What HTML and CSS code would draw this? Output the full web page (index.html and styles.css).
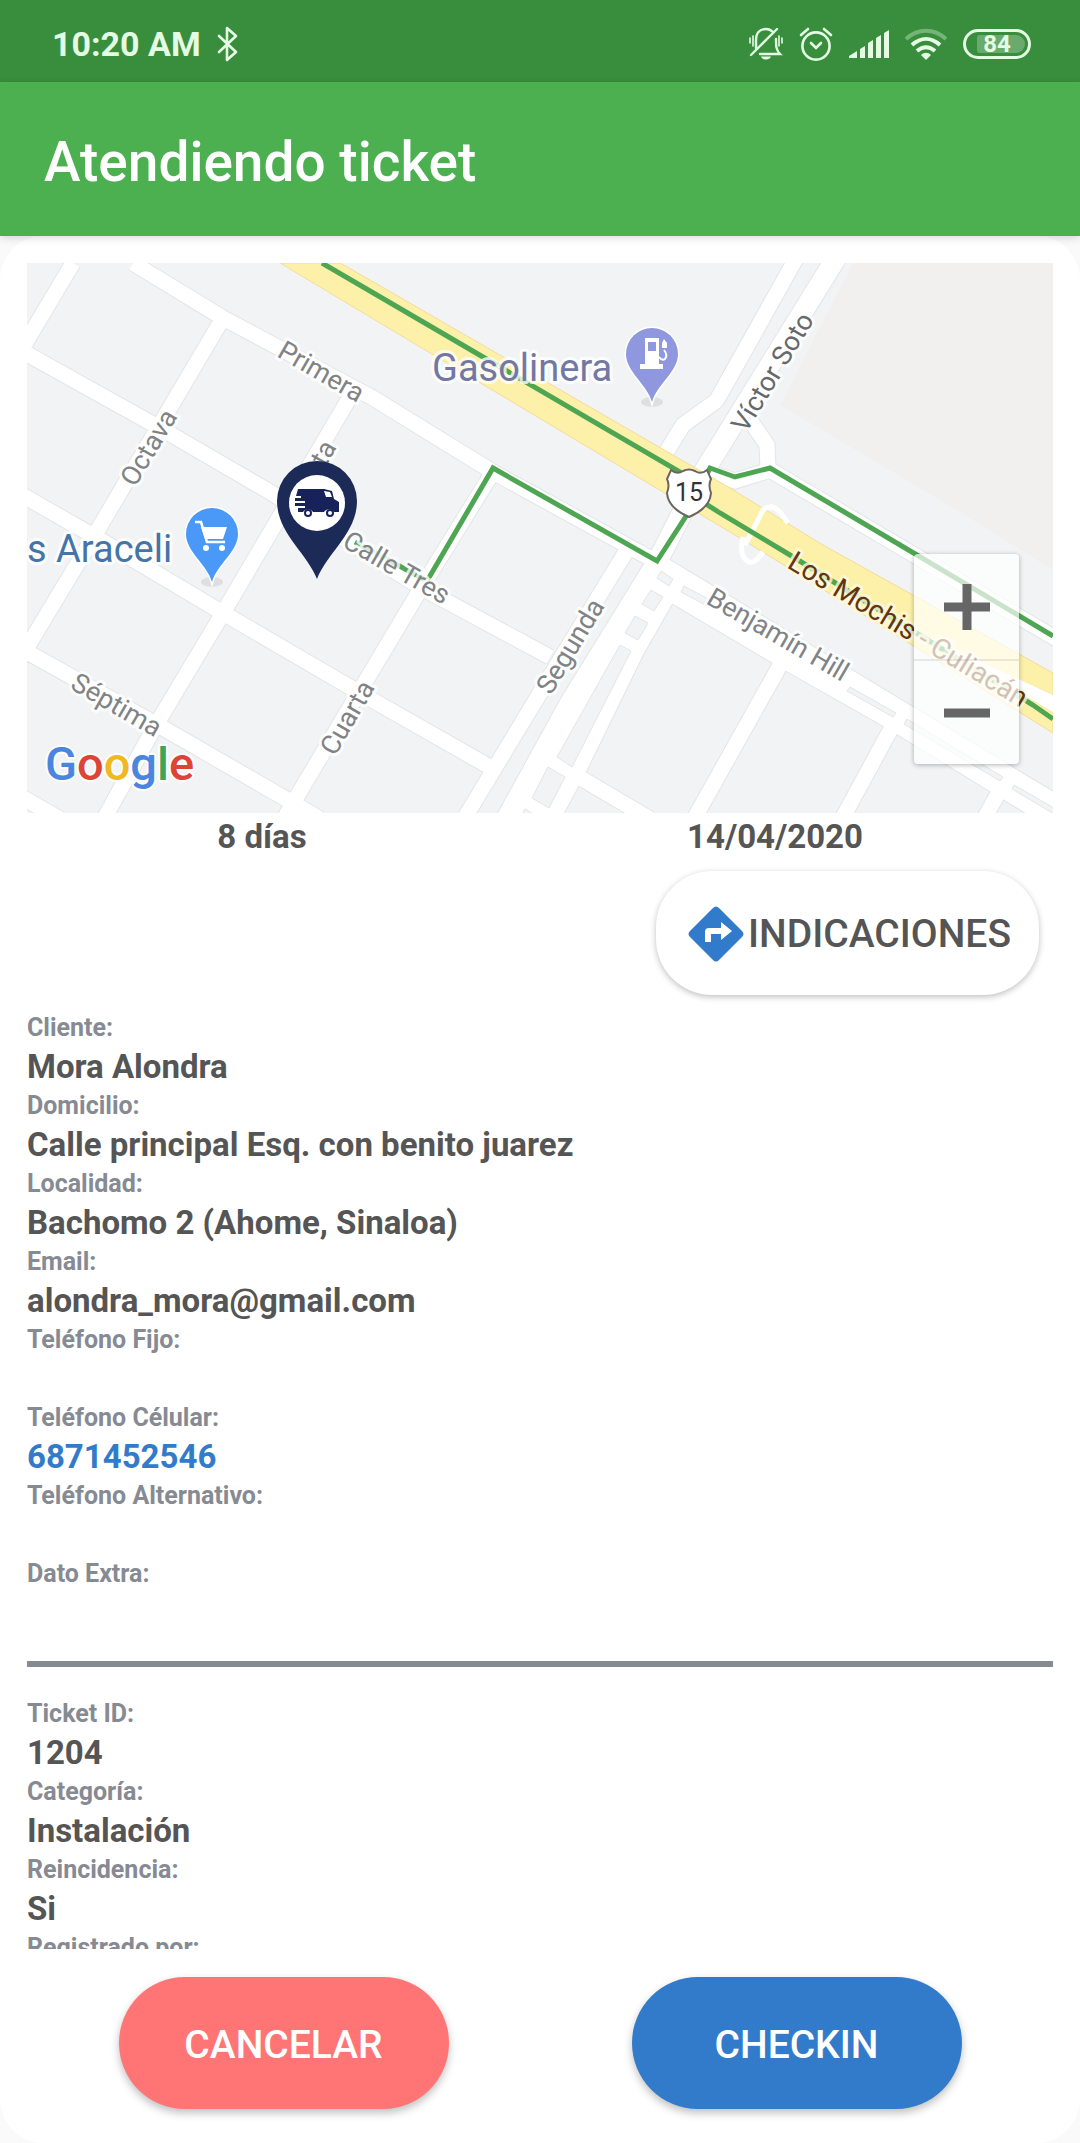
FILE: index.html
```
<!DOCTYPE html>
<html lang="es">
<head>
  <meta charset="UTF-8">
  <meta name="viewport" content="width=device-width, initial-scale=1">
  <title>Atendiendo ticket</title>
  <link rel="stylesheet" href="styles.css">
</head>
<body>

  <div class="status-bar">
    <span class="time">10:20 AM</span>
    <svg class="bluetooth" width="22" height="36" viewBox="0 0 22 36" fill="none" stroke="currentColor" stroke-width="2.6" stroke-linejoin="round" stroke-linecap="round">
      <path d="M2 10l17 16-9 8V2l9 8L2 26"/>
    </svg>
    <div class="status-icons">
      <!-- silent -->
      <svg width="34" height="34" viewBox="0 0 34 34" fill="none" stroke="currentColor" stroke-width="2.4" stroke-linecap="round">
        <path d="M7 21V13C7 6 11 2 17 2c3 0 5 1 7 3M27 12c0 7 0 11 4 15H11"/>
        <path d="M2 28L28 2"/>
        <path d="M1 11v5M4 9v10M30 9v10M33 11v5" stroke-width="1.6"/>
        <path d="M12 29.500h10c-1 4-9 4-10 0z" fill="currentColor" stroke="none"/>
      </svg>
      <!-- alarm -->
      <svg width="34" height="34" viewBox="0 0 34 34" fill="none" stroke="currentColor" stroke-width="2.6" stroke-linecap="round">
        <circle cx="17" cy="19" r="13.600"/>
        <path d="M12 16l5 5 5-5M2 8l7-6M32 8l-7-6"/>
      </svg>
      <!-- signal -->
      <svg width="40" height="30" viewBox="0 0 40 30" fill="currentColor">
        <path d="M0 27l8-5v7H0zM11 20l5-3v12h-5zM19 14l5-3v18h-5zM27 9l5-3v23h-5zM35 4l5-3v28h-5z"/>
      </svg>
      <!-- wifi -->
      <svg width="42" height="32" viewBox="0 0 42 32" fill="none" stroke="currentColor" stroke-width="4">
        <path d="M1 11c12-11 28-11 40 0" opacity=".35"/>
        <path d="M7 17c9-8 19-8 28 0"/>
        <path d="M12 23c6-5 12-5 18 0"/>
        <path d="M16 27c3-3 7-3 10 0l-5 5z" fill="currentColor" stroke="none"/>
      </svg>
      <span class="battery"><b>84</b></span>
    </div>
  </div>

  <header class="app-bar">
    <h1>Atendiendo ticket</h1>
  </header>

  <main class="card">
    <div class="scroll">
      <div class="map">
        <svg class="map-canvas" viewBox="27 263 1026 550" preserveAspectRatio="xMidYMid slice">
          <defs>
            <g id="streets" fill="none">
              <path d="M73 263L20 352M133 263L223 318L373 398L493 472L657 562"/>
              <path d="M20 350L160 428L270 492L420 587L550 657"/>
              <path d="M20 494L92 535L223 613L367 697L490 767"/>
              <path d="M20 648L163 728L293 803L320 819M20 796L60 819"/>
              <path d="M223 318L93 538L20 659M353 392L223 613L153 730L104 819"/>
              <path d="M493 472L420 590L293 803L284 819M627 550L540 693L464 819"/>
              <path d="M798 255L718 398Q716 402 712 404L683 425L660 462"/>
              <path d="M750 420L767 445L768 468"/>
              <path d="M540 754L650 819M677 580L637 650L577 773L552 819"/>
              <path d="M783 660L694 819M892 727L842 819M1000 790L984 819"/>
              <path d="M700 470L735 481L770 470L1060 641"/>
            </g>
            <g id="avenue" fill="none">
              <path d="M838 255L700 478L657 562L570 703L504 823"/>
            </g>
            <path id="benjamin" d="M660 554L1060 796V834L993 793L887 728L788 672L668 601z"/>
            <path id="pin" d="M0 48C-5 30-26 18-26 0A26 26 0 0 1 26 0C26 18 5 30 0 48z"/>
          </defs>

          <rect class="land" x="27" y="263" width="1026" height="550"/>
          <path class="park" d="M853 263L780 405L960 512L1053 570V263z"/>

          <!-- street edges first, then the white fill on top -->
          <use href="#streets" class="edge"/>
          <use href="#avenue" class="edge wide"/>
          <use href="#benjamin" class="edge thin"/>
          <use href="#streets" class="road"/>
          <use href="#avenue" class="road wide"/>
          <use href="#benjamin" class="white"/>
          <path class="white" d="M657 562L677 583L637 647L577 773L555 813H514L570 703z"/>

          <!-- islands between the lanes -->
          <g class="island">
            <path d="M661 571l12 8-4 7-12-8zM651 590l12 7-9 14-12-7zM635 616l13 7-10 17-13-7z"/>
            <path d="M620 645l11 6-59 116-15-10zM548 767l17 10-16 31-17-10zM525 809l10 6h-13z"/>
            <path d="M684 586l26 14-3 6-26-14zM850 687l46 26-3 4-46-26zM907 719l96 58-3 4-96-57zM1014 785l40 23v6l-42-25z"/>
          </g>

          <!-- highway 15 -->
          <path class="highway" d="M280 263H340L370 280L730 488L823 545L1053 673V695L915 632L1053 712V733L787 567L730 532L663 492L370 317z"/>
          <path class="white" d="M905 626L1053 695V712L950 653z"/>
          <path class="ramp" d="M745 545L757 522L763 510Q771 503 780 512L788 523M743 537Q739 553 746 560T763 552"/>

          <path class="route" d="M322 263L370 291L680 472L692 495L720 513L790 555L1033 705L1053 719"/>
          <path class="route" d="M355 542L427 581L493 468L657 561L690 510L710 468L735 477L770 468L917 555L1053 636"/>

          <g class="street-name">
            <text transform="translate(276 356) rotate(30)">Primera</text>
            <text transform="translate(135 488) rotate(-59)">Octava</text>
            <text transform="translate(337 447) rotate(-60)" text-anchor="end">Quinta</text>
            <text transform="translate(341 546) rotate(30)">Calle Tres</text>
            <text transform="translate(551 696) rotate(-59)">Segunda</text>
            <text transform="translate(335 757) rotate(-60)">Cuarta</text>
            <text transform="translate(69 688) rotate(30)">Séptima</text>
            <text transform="translate(705 603) rotate(30)">Benjamín Hill</text>
            <text class="dark" transform="translate(746 434) rotate(-59)">Víctor Soto</text>
            <text class="brown" transform="translate(786 567) rotate(31)">Los Mochis - Culiacán</text>
          </g>

          <path class="shield" d="M671 470q6 5 12 1 6-3 12 0 6 4 12-1l4 9q-3 6 0 14-1 15-22 24-21-9-22-24 3-8 0-14z"/>
          <text class="shield-number" x="689" y="501" text-anchor="middle">15</text>

          <text class="place gas" x="432" y="381">Gasolinera</text>
          <text class="place shop" x="27" y="562">s Araceli</text>

          <g transform="translate(652 354)">
            <ellipse class="pin-shadow" cx="0" cy="48" rx="11" ry="5"/>
            <use href="#pin" class="pin-gas"/>
            <path fill="#fff" d="M-7-16H7V10h4v5h-23v-5h5zM-4-12v9h8v-9z" fill-rule="evenodd"/>
            <path fill="none" stroke="#fff" stroke-width="2" d="M7 3q3 4 6 2 3-4-1-9"/>
            <path fill="#fff" d="M10-11l2-4 3 4v5h-5z"/>
          </g>

          <g transform="translate(212 534)">
            <ellipse class="pin-shadow" cx="0" cy="48" rx="11" ry="5"/>
            <use href="#pin" class="pin-shop"/>
            <path fill="none" stroke="#fff" stroke-width="2.600" d="M-17-12h6L-5 8h18"/>
            <path fill="#fff" d="M-11-7h26l-4 12H-7z"/>
            <circle fill="#fff" cx="-6" cy="14" r="3"/>
            <circle fill="#fff" cx="10" cy="14" r="3"/>
          </g>

          <!-- technician -->
          <g transform="translate(317 503)">
            <path fill="#1b2a57" d="M0 76C-10 50-40 30-40-2A40 40 0 0 1 40-2C40 30 10 50 0 76z"/>
            <circle fill="#fff" r="28"/>
            <path fill="#17225a" d="M-19-14H7l8 2 2 8 5 3V9h-5a6 6 0 0 0-10 0H-4A6 6 0 0 0-14 9h-5V5h7V3h-10V0h10v-2h-10v-3h6v-2h-5z"/>
            <path fill="#fff" d="M7-12l6 1 2 5H9z"/>
            <circle fill="#17225a" cx="-9" cy="10" r="4"/>
            <circle fill="#17225a" cx="13" cy="10" r="4"/>
            <circle fill="#fff" cx="-9" cy="10" r="2"/>
            <circle fill="#fff" cx="13" cy="10" r="2"/>
          </g>

          <text class="google" x="45" y="780"><tspan fill="#4a86e0">G</tspan><tspan fill="#db4437">o</tspan><tspan fill="#f0b923">o</tspan><tspan fill="#4a86e0">g</tspan><tspan fill="#3fa45b">l</tspan><tspan fill="#db4437">e</tspan></text>
        </svg>

        <div class="zoom">
          <button type="button" aria-label="Acercar">
            <svg width="46" height="46" viewBox="0 0 46 46"><path d="M0 23h46M23 0v46"/></svg>
          </button>
          <button type="button" aria-label="Alejar">
            <svg width="46" height="46" viewBox="0 0 46 46"><path d="M0 23h46"/></svg>
          </button>
        </div>
      </div>

      <div class="summary">
        <span>8 días</span>
        <span>14/04/2020</span>
      </div>

      <button type="button" class="directions">
        <svg width="56" height="56" viewBox="0 0 56 56">
          <path fill="#327bca" d="M25 2q3-3 6 0l23 23q3 3 0 6L31 54q-3 3-6 0L2 31q-3-3 0-6z"/>
          <path fill="#fff" d="M17 36V26q0-4 4-4h12v-6l11 9-11 9v-6H23v8z"/>
        </svg>
        INDICACIONES
      </button>

      <dl class="fields">
        <dt>Cliente:</dt>
        <dd>Mora Alondra</dd>
        <dt>Domicilio:</dt>
        <dd>Calle principal Esq. con benito juarez</dd>
        <dt>Localidad:</dt>
        <dd>Bachomo 2 (Ahome, Sinaloa)</dd>
        <dt>Email:</dt>
        <dd>alondra_mora@gmail.com</dd>
        <dt>Teléfono Fijo:</dt>
        <dd></dd>
        <dt>Teléfono Célular:</dt>
        <dd><a href="tel:6871452546">6871452546</a></dd>
        <dt>Teléfono Alternativo:</dt>
        <dd></dd>
        <dt>Dato Extra:</dt>
        <dd></dd>
      </dl>

      <hr>

      <dl class="fields">
        <dt>Ticket ID:</dt>
        <dd>1204</dd>
        <dt>Categoría:</dt>
        <dd>Instalación</dd>
        <dt>Reincidencia:</dt>
        <dd>Si</dd>
        <dt>Registrado por:</dt>
        <dd></dd>
      </dl>
    </div>

    <div class="actions">
      <button type="button" class="cancel">CANCELAR</button>
      <button type="button" class="checkin">CHECKIN</button>
    </div>
  </main>

</body>
</html>
```
FILE: styles.css
```
:root {
  --bar-dark: #388e3c;
  --bar: #4caf50;
  --blue: #327bca;
  --red: #ff7575;
  --text: #555;
  --label: #868a93;
  --status: #e4fbe4;
}

* {
  box-sizing: border-box;
}

body {
  margin: 0;
  height: 100vh;
  display: flex;
  flex-direction: column;
  background: #fafafa;
  color: var(--text);
  font-family: Roboto, sans-serif;
}

button {
  border: none;
  font-family: inherit;
  cursor: pointer;
}

/* bars */
.status-bar {
  height: 82px;
  padding: 6px 49px 0 52px;
  display: flex;
  align-items: center;
  background: var(--bar-dark);
  color: var(--status);
}

.time {
  font-size: 34px;
  font-weight: 700;
}

.bluetooth {
  margin-left: 16px;
}

.status-icons {
  margin-left: auto;
  display: flex;
  align-items: center;
  gap: 16px;
}

.battery {
  width: 68px;
  height: 30px;
  padding: 3px;
  border: 3px solid var(--status);
  border-radius: 15px;
}

.battery b {
  display: block;
  margin-left: 8px;
  padding-right: 8px;
  height: 18px;
  background: rgba(255, 255, 255, 0.25);
  border-radius: 3px 9px 9px 3px;
  font-size: 24px;
  line-height: 18px;
  text-align: center;
}

.app-bar {
  position: relative;
  z-index: 1;
  height: 154px;
  padding: 6px 44px 0;
  display: flex;
  align-items: center;
  background: var(--bar);
  color: white;
  box-shadow: 0 2px 8px rgba(0, 0, 0, 0.15);
}

.app-bar h1 {
  margin: 0;
  font-size: 55px;
  font-weight: 500;
}

/* card */
.card {
  flex: 1;
  min-height: 0;
  padding: 27px 27px 34px;
  display: flex;
  flex-direction: column;
  background: white;
  border-radius: 44px;
}

.scroll {
  flex: 1;
  min-height: 0;
  overflow: hidden auto;
  scrollbar-width: none;
}

/* map */
.map {
  position: relative;
}

.map-canvas {
  display: block;
  width: 100%;
}

.land,
.island {
  fill: #f1f3f4;
}

.island {
  stroke: #e4e5e7;
}

.park {
  fill: #f1f0ee;
}

.edge {
  stroke: #e4e5e7;
  stroke-width: 17px;
}

.road {
  stroke: white;
  stroke-width: 15px;
}

.edge.wide {
  stroke-width: 22px;
}

.road.wide {
  stroke-width: 20px;
}

.edge.thin {
  stroke-width: 2px;
}

.white {
  fill: white;
}

.highway {
  fill: #fdf0a9;
  stroke: #f3dc9c;
}

.ramp {
  fill: none;
  stroke: white;
  stroke-width: 5px;
}

.route {
  fill: none;
  stroke: #4ea653;
  stroke-width: 5px;
}

.street-name {
  font-size: 27px;
  fill: #808385;
  stroke: rgba(255, 255, 255, 0.8);
  stroke-width: 6px;
  stroke-linejoin: round;
  paint-order: stroke;
}

.street-name .dark {
  fill: #66696b;
}

.street-name .brown {
  font-size: 28px;
  fill: #63340f;
  stroke: rgba(255, 250, 225, 0.8);
}

.shield {
  fill: white;
  stroke: #6b6460;
  stroke-width: 2px;
}

.shield-number {
  font-size: 25px;
  fill: #333;
}

.place {
  font-size: 38px;
  stroke: rgba(255, 255, 255, 0.8);
  stroke-width: 6px;
  stroke-linejoin: round;
  paint-order: stroke;
}

.gas {
  fill: #7377a5;
}

.shop {
  fill: #4574a8;
}

.pin-gas,
.pin-shop {
  stroke: white;
  stroke-width: 3px;
  paint-order: stroke;
}

.pin-gas {
  fill: #8f98de;
}

.pin-shop {
  fill: #4a98f7;
}

.pin-shadow {
  fill: rgba(0, 0, 0, 0.08);
}

.google {
  font-size: 47px;
  font-weight: 500;
  stroke: rgba(255, 255, 255, 0.9);
  stroke-width: 4px;
  stroke-linejoin: round;
  paint-order: stroke;
}

.zoom {
  position: absolute;
  right: 34px;
  bottom: 49px;
  width: 105px;
  background: rgba(255, 255, 255, 0.7);
  border-radius: 4px;
  box-shadow: 0 1px 5px rgba(0, 0, 0, 0.3);
}

.zoom button {
  display: flex;
  align-items: center;
  justify-content: center;
  width: 100%;
  height: 105px;
  padding: 0;
  background: none;
}

.zoom button + button {
  border-top: 2px solid rgba(0, 0, 0, 0.08);
}

.zoom path {
  stroke: #666;
  stroke-width: 9px;
}

/* ticket data */
.summary {
  display: flex;
  font-size: 33px;
  font-weight: 700;
  line-height: 48px;
}

.summary span {
  flex: 1;
  padding-right: 43px;
  text-align: center;
}

.directions {
  display: flex;
  align-items: center;
  gap: 4px;
  height: 124px;
  margin: 10px 14px 16px auto;
  padding: 2px 28px 0 32px;
  background: white;
  border-radius: 56px;
  box-shadow: 0 2px 6px rgba(0, 0, 0, 0.25);
  color: var(--text);
  font-size: 39px;
  font-weight: 500;
}

.fields {
  margin: 0;
  font-weight: 700;
}

.fields dt {
  color: var(--label);
  font-size: 25px;
  line-height: 34px;
}

.fields dd {
  margin: 0;
  height: 44px;
  font-size: 33px;
  line-height: 44px;
}

.fields a {
  color: var(--blue);
  text-decoration: none;
}

hr {
  height: 6px;
  margin: 26px 0 30px;
  border: none;
  background: var(--label);
}

/* bottom buttons */
.actions {
  display: flex;
  padding-top: 28px;
}

.actions button {
  width: 330px;
  height: 132px;
  margin: 0 auto;
  padding-top: 4px;
  border-radius: 66px;
  box-shadow: 0 4px 8px rgba(0, 0, 0, 0.25);
  color: white;
  font-size: 39px;
  font-weight: 500;
}

.actions .cancel {
  background: var(--red);
}

.actions .checkin {
  background: var(--blue);
}
```
